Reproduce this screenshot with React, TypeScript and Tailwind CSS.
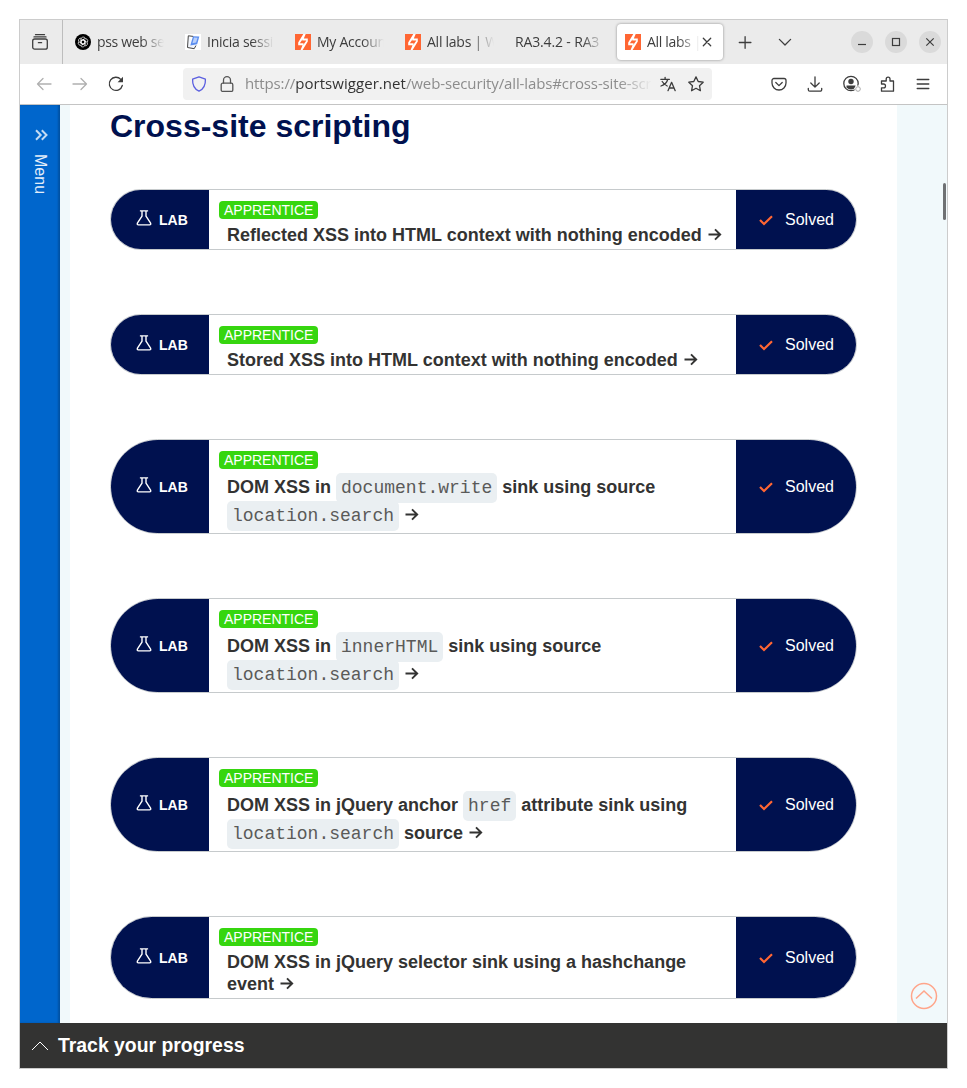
import React from 'react';

const Swigger = () => (
  <svg className="block size-4 shrink-0" viewBox="0 0 16 16">
    <rect width="16" height="16" fill="#ff6633" />
    <path d="M8.300 0H10.700L8.800 4.600H12.800V7.400L7.600 16H5.600L7.500 11.300H3.200V8.600z" fill="#fff" />
    <path d="M7.600 5.300L4.800 9.200H8.600L8.200 11L11.400 6.500H7.200z" fill="#ff6633" />
  </svg>
);

const Knot = () => (
  <svg className="block size-4 shrink-0" viewBox="0 0 16 16" fill="none">
    <circle cx="8" cy="8" r="8" fill="#000" />
    <g stroke="#fff" strokeWidth=".7">
      {[0, 60, 120, 180, 240, 300].map((a) => (
        <path key={a} transform={`rotate(${a} 8 8)`} d="M6.100 9.100V5.200a2.200 2.200 0 0 1 4.200-.9M6.100 6.900l2-1.200 3.300 1.900" />
      ))}
    </g>
  </svg>
);

const Notebook = () => (
  <svg className="block size-4 shrink-0" viewBox="0 0 16 16">
    <rect width="16" height="16" fill="#fff" />
    <path d="M3.300 1.800L2.500 13.500l6.700 1.200L11 11.500" fill="#f3f6fc" stroke="#444" strokeWidth="1" />
    <path d="M3.300 1.800l5 .6" fill="none" stroke="#444" strokeWidth="1" />
    <path d="M8 2.200l6.300.4-2.100 7.600-6.900 1.300z" fill="#5b8def" />
    <path d="M9 3.600l3.600.2-1.500 4.700-3.700.8z" fill="#b9d0fa" />
  </svg>
);

type TabProps = { icon?: React.ReactNode; text: string; box: string; track: string };
const Tab = ({ icon, text, box, track }: TabProps) => (
  <div className={`flex h-9 shrink-0 items-center gap-[6px] ${box}`}>
    {icon}
    <span className={`min-w-0 flex-1 overflow-hidden whitespace-nowrap [mask-image:linear-gradient(to_right,#000_calc(100%-22px),transparent)] ${track}`}>{text}</span>
  </div>
);

const WinButton = ({ children }: { children: React.ReactNode }) => (
  <div className="flex size-[22px] items-center justify-center rounded-full bg-[#dadada]">
    <svg className="block size-[22px]" viewBox="0 0 22 22" fill="none" stroke="#3d3d3d" strokeWidth="1.2">{children}</svg>
  </div>
);

const Ico = ({ children, c = '#3d3d3d', cls = '' }: { children: React.ReactNode; c?: string; cls?: string }) => (
  <svg className={`block size-4 shrink-0 ${cls}`} viewBox="0 0 16 16" fill="none" stroke={c} strokeWidth="1.3" strokeLinecap="round" strokeLinejoin="round">
    {children}
  </svg>
);

const Arrow = () => (
  <svg className="ml-[6px] inline-block h-[14px] w-[14px] align-[-1px]" viewBox="0 0 14 14" fill="none" stroke="#333332" strokeWidth="1.900">
    <path d="M.5 6.500H12.300M7 1.300l5.200 5.200L7 11.700" />
  </svg>
);

const Code = ({ children }: { children: string }) => (
  <code className="rounded-[5px] bg-[#eaeff2] px-[5px] py-[5px] font-['Liberation_Mono',monospace] text-[18px] font-normal leading-none text-[#5a5a59]">{children}</code>
);

type LabProps = { h: string; pad: string; lead: string; children: React.ReactNode };
const Lab = ({ h, pad, lead, children }: LabProps) => (
  <div className={`flex w-[747px] overflow-hidden rounded-full border border-[#c6cacc] bg-white ${h}`}>
    <div className="flex w-[98px] shrink-0 items-center bg-[#00114f] pl-[25px] text-sm font-bold text-white">
      <svg className="-mt-[3px] mr-[7px] block h-4 w-4" viewBox="0 0 16 16" fill="none" stroke="#fff" strokeWidth="1.400" strokeLinejoin="round">
        <path d="M3.900.9h8.200M6 1v5.200L1.400 13.200q-.6 1.700 1 1.700h11.200q1.600 0 1-1.700L10 6.200V1" />
      </svg>
      <span>LAB</span>
    </div>
    <div className="flex w-[527px] shrink-0 flex-col items-start pl-[10px] pt-[11px]">
      <span className="h-[18px] rounded bg-[#36d60f] px-[5px] text-sm leading-[18px] text-white">APPRENTICE</span>
      <div className={`pl-2 text-[18px] font-bold text-[#333332] ${pad} ${lead}`}>{children}</div>
    </div>
    <div className="flex flex-1 items-center bg-[#00114f] pl-[23px] text-base text-white">
      <svg className="mr-3 mt-[2px] block h-[11px] w-[14px]" viewBox="0 0 14 11" fill="none" stroke="#ff6633" strokeWidth="2.200">
        <path d="M1 5l4 4L13 1.200" />
      </svg>
      <span>Solved</span>
    </div>
  </div>
);

export default function App() {
  return (
    <div className="h-[1088px] w-[967px] overflow-hidden bg-white pl-[19px] pt-[19px] font-['Liberation_Sans',Arial,sans-serif]">
      <div className="flex h-[1050px] w-[929px] flex-col border border-[#cccccc] bg-white">
        <div className="flex h-11 shrink-0 items-center bg-[#ebebeb] font-['Open_Sans',sans-serif] text-sm text-[#3d3d3d]">
          <div className="flex h-full w-[43px] shrink-0 items-center justify-center border-r border-[#bdbdbd] pr-[2px]">
            <Ico>
              <rect x=".7" y="5" width="14.600" height="10.200" rx="2" />
              <path d="M2 2.900h12M3.500.7h9M6.400 8.700h3.200" />
            </Ico>
          </div>
          <Tab icon={<Knot />} text="pss web se" box="ml-3 w-[89px]" track="tracking-[-0.350px]" />
          <Tab icon={<Notebook />} text="Inicia sessi" box="ml-[21px] w-[89px]" track="tracking-[-0.250px]" />
          <Tab icon={<Swigger />} text="My Accoun" box="ml-[21px] w-[89px]" track="tracking-[-0.250px]" />
          <Tab icon={<Swigger />} text="All labs | W" box="ml-[21px] w-[89px]" track="tracking-[-0.250px]" />
          <Tab text="RA3.4.2 - RA3" box="ml-[21px] w-[89px]" track="tracking-[-0.150px]" />
          <div className="ml-[13px] flex h-9 w-[106px] shrink-0 items-center rounded bg-white pl-2 shadow-[0_0_3px_rgba(0,0,0,.4)]">
            <Tab icon={<Swigger />} text="All labs |" box="w-[75px]" track="tracking-[-0.300px]" />
            <Ico cls="ml-[-1px]"><path d="M4.300 4.300l7.400 7.400M11.700 4.300l-7.400 7.400" /></Ico>
          </div>
          <Ico cls="ml-[14px]"><path d="M2.300 8.500h11.600M8.100 2.700v11.600" /></Ico>
          <Ico cls="ml-6"><path d="M2.400 5.400L8 11l5.600-5.600" /></Ico>
          <div className="ml-auto mr-[6px] flex gap-3">
            <WinButton><path d="M7 13.500h8" /></WinButton>
            <WinButton><rect x="7.500" y="7.500" width="7" height="7" /></WinButton>
            <WinButton><path d="M7.300 7.300l7.400 7.400M14.700 7.300l-7.400 7.400" /></WinButton>
          </div>
        </div>
        <div className="flex h-[41px] shrink-0 items-center border-b border-[#c4c4c4] bg-white">
          <Ico c="#b0b0b0" cls="ml-4"><path d="M15 8H1.500M7 2.500L1.500 8 7 13.500" /></Ico>
          <Ico c="#b0b0b0" cls="ml-5"><path d="M1 8h13.500M9 2.500L14.500 8 9 13.500" /></Ico>
          <Ico cls="ml-5"><path d="M14.300 9.500A6.600 6.600 0 1 1 12.800 3.400" /><path d="M15 .8v5.400H9.600z" fill="#3d3d3d" stroke="none" /></Ico>
          <div className="ml-[59px] flex h-8 w-[529px] shrink-0 items-center rounded bg-[#f1f1f1] pl-2">
            <Ico c="#5b5fe0"><path d="M8 .8l6.400 2.400c.3 5.500-1.200 9.500-6.400 12C2.800 12.700 1.300 8.700 1.600 3.200z" /></Ico>
            <Ico c="#555" cls="ml-3"><rect x="2.200" y="7.200" width="11.600" height="8.200" rx="1.500" /><path d="M4.500 7V4.200a3.500 3.500 0 0 1 7 0V7" /></Ico>
            <div className="-mt-[2px] ml-[10px] w-[407px] shrink-0 overflow-hidden whitespace-nowrap font-['Open_Sans',sans-serif] text-[15px] tracking-[-0.120px] text-[#8c8c8c] [mask-image:linear-gradient(to_right,#000_calc(100%-34px),transparent)]">
              https://<span className="tracking-[0.050px] text-[#333]">portswigger.net</span>/web-security/all-labs#cross-site-scr
            </div>
            <Ico cls="ml-2"><path d="M.8 3.300h8.600M5.100 1.300v2M2.200 5.500c1.400 2.300 3 3.500 5 4.500M7.700 3.500c-.8 3-3.200 5.300-6.700 6.500M8 14.700l3.600-8.400 3.600 8.400M9.300 12h4.600" /></Ico>
            <Ico cls="ml-[12px]"><path d="M8 .9l2.200 4.600 5 .7-3.700 3.500.9 5L8 12.300l-4.400 2.400.9-5L.8 6.200l5-.7z" /></Ico>
          </div>
          <Ico cls="ml-[59px]"><path d="M3 2.500h10a2 2 0 0 1 2 2V7a7 7 0 0 1-14 0V4.500a2 2 0 0 1 2-2zM4.800 6.500L8 9.600l3.200-3.100" /></Ico>
          <Ico cls="ml-5"><path d="M8 .8v10M3.800 7L8 11.100 12.200 7M1.300 12.300v1.400a1.500 1.500 0 0 0 1.500 1.500h10.400a1.500 1.500 0 0 0 1.500-1.500v-1.400" /></Ico>
          <svg className="ml-5 block h-[18px] w-[18px] shrink-0" viewBox="0 0 18 18" fill="none">
            <circle cx="8" cy="8.500" r="7.200" stroke="#3d3d3d" strokeWidth="1.300" />
            <circle cx="8" cy="6.500" r="2.700" fill="#3d3d3d" />
            <path d="M3.500 10.600h9v1.800a5.800 5.800 0 0 1-9 0z" fill="#3d3d3d" />
            <circle cx="15" cy="14" r="3.600" fill="#fff" />
            <circle cx="15" cy="14" r="2.300" stroke="#aaa" />
          </svg>
          <Ico cls="ml-[19px]"><path d="M1.500 15.200V11.800h2.100a1.900 1.900 0 0 0 0-3.800H1.500V5h4.700V3a1.900 1.900 0 0 1 3.800 0v2h3.500V15.200z" /></Ico>
          <Ico cls="ml-[19px]"><path d="M2.200 3.500h11.600M2.200 8h11.600M2.200 12.500h11.600" /></Ico>
        </div>
        <div className="relative flex h-[918px] shrink-0 overflow-hidden bg-[#f1f9fb]">
          <div className="flex w-10 shrink-0 flex-col items-center bg-[#0066cc] pt-6 shadow-[inset_-2px_0_2px_rgba(0,0,0,.2)]">
            <svg className="ml-[3px] block h-3 w-[13px]" viewBox="0 0 13 12" fill="none" stroke="#c4dbf3" strokeWidth="2"><path d="M1 1.300l4.700 4.700L1 10.700M6.800 1.300l4.700 4.700-4.700 4.700" /></svg>
            <span className="mt-[13px] text-base leading-4 text-[#e4eefa] [writing-mode:vertical-rl]">Menu</span>
          </div>
          <div className="ml-[10px] w-[827px] shrink-0 bg-white pl-10">
            <h1 className="h-[84px] text-[32px] font-bold leading-[42px] text-[#00114f]">Cross-site scripting</h1>
            <div className="flex flex-col gap-16">
              <Lab h="h-[61px]" pad="pt-[5px]" lead="leading-[22px]">Reflected XSS into HTML context with nothing encoded<Arrow /></Lab>
              <Lab h="h-[61px]" pad="pt-[5px]" lead="leading-[22px]">Stored XSS into HTML context with nothing encoded<Arrow /></Lab>
              <Lab h="h-[95px]" pad="pt-1" lead="leading-[28px]">DOM XSS in <Code>document.write</Code> sink using source<br /><Code>location.search</Code><Arrow /></Lab>
              <Lab h="h-[95px]" pad="pt-1" lead="leading-[28px]">DOM XSS in <Code>innerHTML</Code> sink using source<br /><Code>location.search</Code><Arrow /></Lab>
              <Lab h="h-[95px]" pad="pt-1" lead="leading-[28px]">DOM XSS in jQuery anchor <Code>href</Code> attribute sink using<br /><Code>location.search</Code> source<Arrow /></Lab>
              <Lab h="h-[83px]" pad="pt-[5px]" lead="leading-[22px]">DOM XSS in jQuery selector sink using a hashchange<br />event<Arrow /></Lab>
            </div>
          </div>
          <svg className="absolute right-[9px] top-[877px] block size-7" viewBox="0 0 28 28" fill="none" stroke="#ffa58a" strokeWidth="1.500"><circle cx="14" cy="14" r="12.500" /><path d="M6 16.500L14 9l8 7.500" /></svg>
          <div className="absolute right-[1px] top-[78px] h-[37px] w-[3px] rounded-full bg-[#6f7173]" />
        </div>
        <div className="flex h-[45px] shrink-0 items-center bg-[#333332] pl-[11px]">
          <svg className="block h-[10px] w-[18px]" viewBox="0 0 18 10" fill="none" stroke="#fff"><path d="M1 9l8-8 8 8" /></svg>
          <span className="ml-[9px] text-[19.400px] font-bold text-white">Track your progress</span>
        </div>
      </div>
    </div>
  );
}
